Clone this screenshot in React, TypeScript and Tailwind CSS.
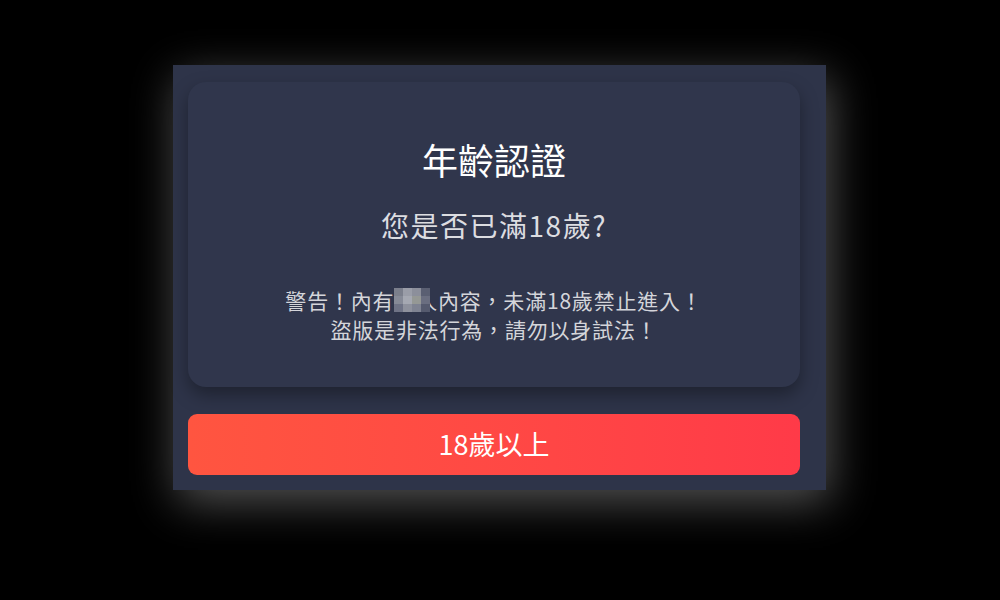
import React from "react";

const mosaic = [
  ["#7b7f8c", "#9a9da8", "#8c8f9b", "#5a5f72"],
  ["#868a97", "#a5a8b2", "#959895", "#6a6e80"],
  ["#6f7386", "#8e919d", "#7f8392", "#555a6e"],
];

export default function App() {
  return (
    <div
      className="w-[1000px] h-[600px] bg-black flex flex-col items-start"
      style={{ fontFamily: '"Noto Sans CJK TC", "Noto Sans", sans-serif' }}
    >
      <div className="ml-[173px] mt-[65px] w-[653px] h-[425px] bg-[#2e3449] pl-[15px] pr-[26px] pt-[17px] flex flex-col shadow-[4px_12px_42px_rgba(255,255,255,0.32)]">
        <div className="h-[305px] rounded-[18px] bg-[#30364c] shadow-[0_8px_18px_rgba(0,0,0,0.35)] flex flex-col items-center pt-[52px]">
          <div className="text-[36px] leading-[50px] text-white">年齡認證</div>
          <div className="mt-[21px] text-[28px] leading-[40px] tracking-[1.5px] text-[#dcdde1]">
            您是否已滿18歲?
          </div>
          <div className="mt-[41px] text-[21px] leading-[29px] text-[#d4d5da] text-center tracking-[0.8px]">
            <div>
              警告！內有
              <span className="relative">
                成人
                <span className="absolute left-0 top-[3px] grid grid-cols-4">
                  {mosaic.flat().map((c, i) => (
                    <span key={i} className="block w-[9px] h-[8px]" style={{ backgroundColor: c }} />
                  ))}
                </span>
              </span>
              內容，未滿18歲禁止進入！
            </div>
            <div>盜版是非法行為，請勿以身試法！</div>
          </div>
        </div>
        <button className="mt-[27px] h-[61px] rounded-[9px] bg-linear-to-r from-[#ff5540] to-[#ff3a48] text-white text-[27px] flex items-center justify-center">
          18歲以上
        </button>
      </div>
    </div>
  );
}
